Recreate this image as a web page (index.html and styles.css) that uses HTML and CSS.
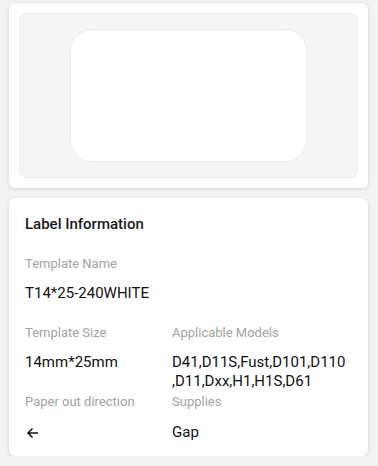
FILE: index.html
```html
<!DOCTYPE html>
<html>
<head>
<meta charset="utf-8">
<link rel="stylesheet" href="styles.css">
</head>
<body>
<div class="page">
  <div class="card preview-card">
    <div class="preview-area">
      <div class="label-shape"></div>
    </div>
  </div>
  <div class="card info-card">
    <div class="title">Label Information</div>
    <div class="field full">
      <div class="key">Template Name</div>
      <div class="val">T14*25-240WHITE</div>
    </div>
    <div class="grid">
      <div class="field">
        <div class="key">Template Size</div>
        <div class="val">14mm*25mm</div>
      </div>
      <div class="field">
        <div class="key">Applicable Models</div>
        <div class="val">D41,D11S,Fust,D101,D110<br>,D11,Dxx,H1,H1S,D61</div>
      </div>
      <div class="field last">
        <div class="key">Paper out direction</div>
        <div class="val arrow"><svg width="13" height="12" viewBox="0 0 13 12"><path d="M12 6H2M6.5 1.5L2 6L6.5 10.5" fill="none" stroke="#111" stroke-width="1.5"/></svg></div>
      </div>
      <div class="field last">
        <div class="key">Supplies</div>
        <div class="val">Gap</div>
      </div>
    </div>
  </div>
</div>
</body>
</html>
```
FILE: styles.css
```css
html, body {
  margin: 0;
  padding: 0;
  background: #f3f3f3;
  font-family: Roboto, "Noto Sans", sans-serif;
}
.page {
  padding: 3px 10px 0 9px;
  display: flex;
  flex-direction: column;
  gap: 10px;
}
.card {
  background: #fff;
  border-radius: 6px;
  box-shadow: 0 1px 4px rgba(0,0,0,0.14);
}
.preview-card {
  height: 185px;
  box-sizing: border-box;
  padding: 10px;
}
.preview-area {
  height: 165px;
  box-sizing: border-box;
  background: #f5f5f5;
  border: 1px solid #ededed;
  border-radius: 8px;
  display: flex;
  align-items: center;
  justify-content: center;
}
.label-shape {
  width: 237px;
  height: 133px;
  background: #fff;
  border: 1px solid #ececec;
  box-sizing: border-box;
  border-radius: 22px;
}
.info-card {
  height: 258px;
  box-sizing: border-box;
  padding: 16px 16px 0 16px;
}
.title {
  font-size: 15px;
  font-weight: 500;
  color: #1a1a1a;
  line-height: 20px;
}
.field.full {
  margin-top: 21px;
}
.key {
  font-size: 13px;
  color: #a2a2a2;
  line-height: 18px;
}
.val {
  font-size: 15px;
  color: #111;
  line-height: 19px;
  margin-top: 11px;
}
.grid {
  margin-top: 21px;
  display: grid;
  grid-template-columns: 147px 1fr;
  row-gap: 2px;
}
.field.last .val {
  margin-top: 12px;
}
.arrow {
  height: 19px;
  display: flex;
  align-items: center;
  padding-left: 1px;
}
```
